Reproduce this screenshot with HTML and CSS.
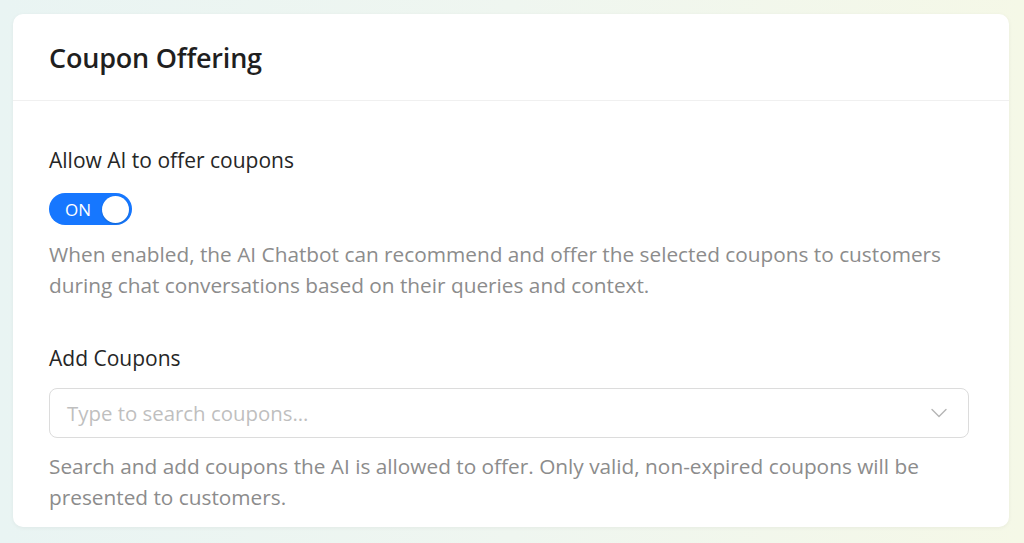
FILE: index.html
```html
<!DOCTYPE html>
<html lang="en">
<head>
<meta charset="utf-8">
<title>Coupon Offering</title>
<link rel="stylesheet" href="styles.css">
</head>
<body>
<div class="page">
  <section class="card">
    <header class="card-head">
      <h1 class="card-title">Coupon Offering</h1>
    </header>
    <div class="card-body">
      <div class="field-label">Allow AI to offer coupons</div>
      <button class="switch" type="button">
        <span class="switch-text">ON</span>
        <span class="switch-knob"></span>
      </button>
      <p class="help help-first">When enabled, the AI Chatbot can recommend and offer the selected coupons to customers during chat conversations based on their queries and context.</p>
      <div class="field-label label-second">Add Coupons</div>
      <div class="select">
        <span class="placeholder">Type to search coupons...</span>
        <svg class="chevron" width="18" height="18" viewBox="0 0 18 18" fill="none" stroke="#b5b5b5" stroke-width="1.4" stroke-linecap="round" stroke-linejoin="round"><path d="M2 5.5 L9 12.5 L16 5.5"/></svg>
      </div>
      <p class="help help-second">Search and add coupons the AI is allowed to offer. Only valid, non-expired coupons will be presented to customers.</p>
    </div>
  </section>
</div>
</body>
</html>
```

FILE: styles.css
```css
html, body {
  margin: 0;
  padding: 0;
}
body {
  width: 1024px;
  height: 543px;
  overflow: hidden;
  font-family: "Open Sans", "Noto Sans", "Liberation Sans", sans-serif;
  background: linear-gradient(90deg, #e9f4f3 0%, #eff6f0 50%, #f5f8e7 100%);
}
.page {
  padding: 14px 15px 0 13px;
}
.card {
  background: #ffffff;
  border-radius: 10px;
  height: 513px;
  box-shadow: 0 1px 4px rgba(0, 0, 0, 0.05);
  overflow: hidden;
}
.card-head {
  height: 86px;
  border-bottom: 1px solid #f0f0f0;
  display: flex;
  align-items: center;
  padding: 0 36px;
}
.card-title {
  margin: 0;
  font-size: 27px;
  font-weight: 600;
  color: #1f1f1f;
  letter-spacing: -0.2px;
}
.card-body {
  padding: 44px 36px 0 36px;
}
.field-label {
  font-size: 21px;
  line-height: 31px;
  color: #262626;
}
.label-second {
  margin-top: 42px;
}
.switch {
  margin-top: 17px;
  display: flex;
  align-items: center;
  justify-content: space-between;
  width: 83px;
  height: 32px;
  border: none;
  border-radius: 16px;
  background: #1677ff;
  padding: 0 3px 0 16px;
  box-sizing: border-box;
  cursor: pointer;
}
.switch-text {
  color: #ffffff;
  font-family: "Open Sans", "Noto Sans", sans-serif;
  font-size: 17px;
  line-height: 1;
}
.switch-knob {
  width: 27px;
  height: 27px;
  border-radius: 50%;
  background: #ffffff;
  box-shadow: 0 1px 2px rgba(0, 35, 11, 0.2);
}
.help {
  margin: 0;
  font-size: 20.8px;
  line-height: 31px;
  color: #8c8c8c;
}
.help-first {
  margin-top: 14px;
}
.help-second {
  margin-top: 13px;
}
.select {
  margin-top: 14px;
  height: 50px;
  box-sizing: border-box;
  border: 1px solid #dcdcdc;
  border-radius: 8px;
  display: flex;
  align-items: center;
  justify-content: space-between;
  padding: 0 20px 0 17px;
  margin-right: 4px;
}
.placeholder {
  font-size: 20.4px;
  color: #bfbfbf;
}
.chevron {
  display: block;
}
```
